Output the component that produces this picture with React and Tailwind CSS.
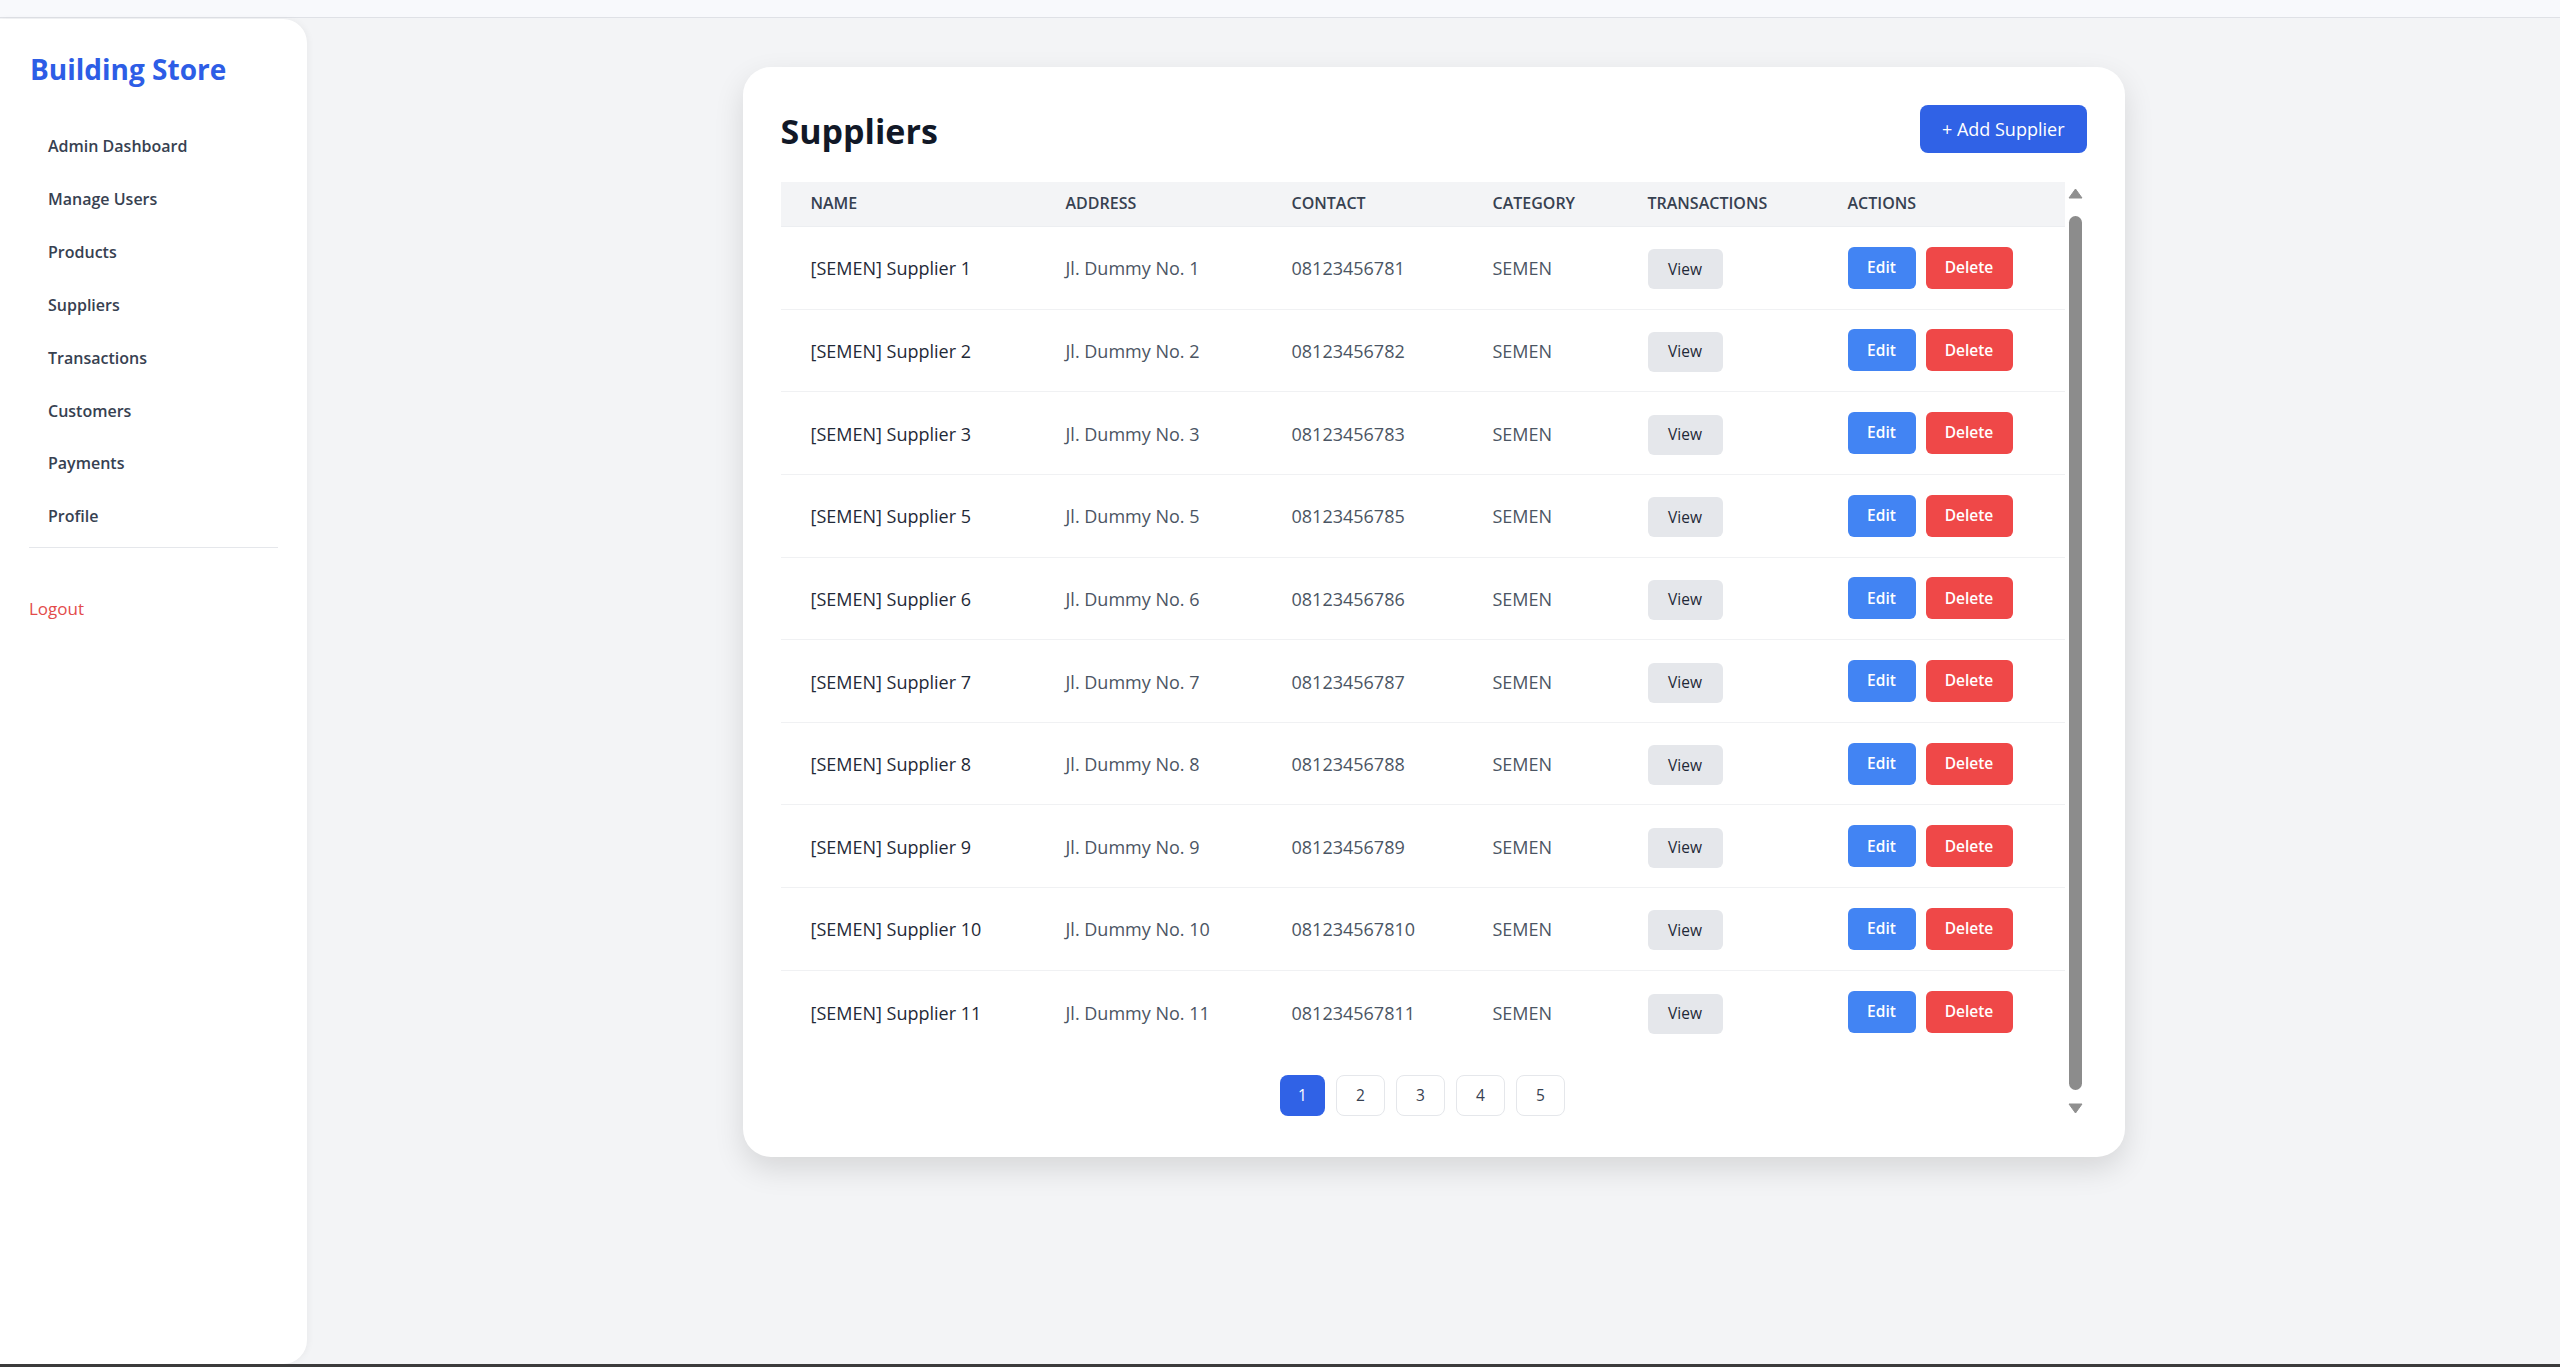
import React from 'react';

const navItems = ['Admin Dashboard', 'Manage Users', 'Products', 'Suppliers', 'Transactions', 'Customers', 'Payments', 'Profile'];

const suppliers = [1, 2, 3, 5, 6, 7, 8, 9, 10, 11].map((n) => ({
  id: n,
  name: `[SEMEN] Supplier ${n}`,
  address: `Jl. Dummy No. ${n}`,
  contact: `0812345678${n}`,
  category: 'SEMEN',
}));

const cols = 'grid grid-cols-[255px_226px_201px_155px_200px_247px]';

const Sidebar = () => (
  <aside className="w-[307px] shrink-0 bg-white rounded-r-3xl shadow-[2px_0_6px_rgba(0,0,0,0.04)] px-[29px] pt-[32px]">
    <h1 className="pl-px text-[28px] leading-[36px] font-bold text-[#2d5de6]">Building Store</h1>
    <nav className="mt-[33px]">
      {navItems.map((item) => (
        <a key={item} href="#" className="flex items-center h-[52.85px] pl-[19px] text-[16px] leading-6 font-semibold text-[#374151]">
          {item}
        </a>
      ))}
    </nav>
    <div className="mt-[4px] border-t border-[#e5e7eb]" />
    <button className="mt-[49px] block text-[17px] leading-6 font-medium text-[#e34b4b]">Logout</button>
  </aside>
);

const Scrollbar = () => (
  <div className="w-[22px] shrink-0 flex flex-col items-center">
    <svg width="15" height="11" viewBox="0 0 15 11" className="mt-[6px]">
      <path d="M7.5 1 L14 10 L1 10 Z" fill="#8f8f8f" stroke="#8f8f8f" strokeLinejoin="round" />
    </svg>
    <div className="mt-[17px] flex-1 w-[13px] rounded-full bg-[#8c8c8c]" />
    <svg width="15" height="11" viewBox="0 0 15 11" className="mt-[13px] mb-[3px]">
      <path d="M1 1 L14 1 L7.5 10 Z" fill="#8f8f8f" stroke="#8f8f8f" strokeLinejoin="round" />
    </svg>
  </div>
);

const SupplierTable = () => (
  <div className="w-[1284px] shrink-0">
    <div className={`${cols} h-[45px] bg-[#f3f4f6] border-b border-[#eceef1] text-[16px] font-semibold uppercase text-[#374151]`}>
      {['Name', 'Address', 'Contact', 'Category', 'Transactions', 'Actions'].map((h) => (
        <div key={h} className="pl-[30px] pb-[3px] flex items-center">{h}</div>
      ))}
    </div>
    <div className="divide-y divide-[#f0f1f3]">
      {suppliers.map((s) => (
        <div key={s.id} className={`${cols} h-[82.65px] items-center text-[18px]`}>
          <div className="pl-[30px] pt-[2px] text-[#1f2937]">{s.name}</div>
          <div className="pl-[30px] pt-[2px] text-[#4b5563]">{s.address}</div>
          <div className="pl-[30px] pt-[2px] text-[#4b5563]">{s.contact}</div>
          <div className="pl-[30px] pt-[2px] text-[#4b5563]">{s.category}</div>
          <div className="pl-[30px]">
            <button className="w-[75px] h-[40px] mt-[3px] rounded-md bg-[#e5e7eb] text-[15.5px] font-medium text-[#1f2937]">View</button>
          </div>
          <div className="pl-[30px] flex gap-[10px]">
            <button className="w-[68px] h-[42px] rounded-md bg-[#4284f3] text-[15.5px] font-semibold text-white">Edit</button>
            <button className="w-[87px] h-[42px] rounded-md bg-[#ef4848] text-[15.5px] font-semibold text-white">Delete</button>
          </div>
        </div>
      ))}
    </div>
    <div className="mt-[22px] flex justify-center gap-[11px]">
      {[1, 2, 3, 4, 5].map((p) => (
        <button
          key={p}
          className={
            p === 1
              ? 'w-[45px] h-[41px] rounded-lg bg-[#3062e6] text-white text-[15.5px] font-medium'
              : 'w-[49px] h-[41px] rounded-lg border border-[#e5e7eb] bg-white text-[#374151] text-[15.5px] font-medium'
          }
        >
          {p}
        </button>
      ))}
    </div>
  </div>
);

export default function App() {
  return (
    <div className="h-[1367px] flex flex-col bg-[#f3f4f6] font-['Open_Sans',sans-serif] overflow-hidden">
      <div className="h-[18px] shrink-0 bg-[#f8f9fc] border-b border-[#dfe1e6]" />
      <div className="flex flex-1 pt-px min-h-0">
        <Sidebar />
        <main className="flex-1 flex justify-center pt-[48px]">
          <div className="w-[1382px] h-[1090px] bg-white rounded-[28px] shadow-[0_12px_30px_rgba(0,0,0,0.12)] pt-[38px] pl-[38px] pr-[38px]">
            <div className="flex items-start justify-between">
              <h2 className="mt-[6px] text-[34px] leading-[40px] font-bold text-[#111827]">Suppliers</h2>
              <button className="h-[48px] px-[22px] rounded-lg bg-[#3062e6] text-[18px] text-white">+ Add Supplier</button>
            </div>
            <div className="mt-[29px] h-[935px] flex">
              <SupplierTable />
              <Scrollbar />
            </div>
          </div>
        </main>
      </div>
      <div className="h-[3px] shrink-0 bg-[#3b3b3b]" />
    </div>
  );
}
